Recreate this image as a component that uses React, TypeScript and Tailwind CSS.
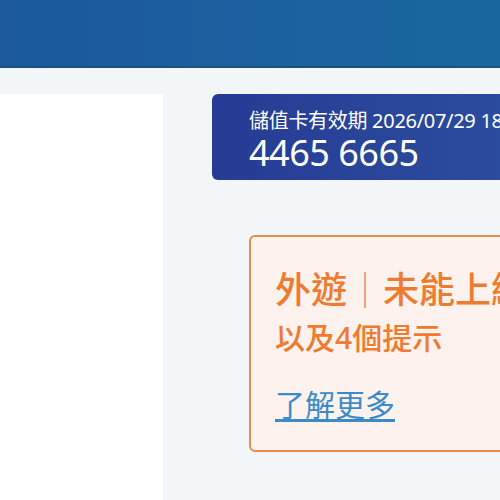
import React from 'react'

const cjk = { fontFamily: '"Noto Sans", "Noto Sans CJK TC", sans-serif' }

function Header() {
  return (
    <div className="h-[68px] shrink-0 border-b-2 border-[#1d4f82] bg-gradient-to-r from-[#1b599b] to-[#1a679f]" />
  )
}

function CardBanner() {
  return (
    <div className="h-[86px] w-[400px] rounded-[6px] bg-gradient-to-r from-[#273b94] to-[#2c53a2] pl-[37px] pt-[14px] text-white">
      <div className="whitespace-nowrap text-[20px] leading-[26px] tracking-[-0.3px]">儲值卡有效期 2026/07/29 18:00</div>
      <div className="text-[36px] leading-[38px] tracking-[-0.5px]">4465 6665</div>
    </div>
  )
}

function NoticeCard() {
  return (
    <div className="ml-[37px] h-[217px] w-[360px] rounded-[6px] border-2 border-[#e98c4f] bg-[#fdf2ed] pl-[24px] pt-[28px]">
      <div className="flex items-center whitespace-nowrap text-[36px] leading-[50px] font-medium text-[#ee7b2f]">
        <span>外遊</span>
        <span className="mx-[17px] h-[36px] w-[2px] bg-[#f0a678]" />
        <span>未能上網</span>
      </div>
      <div className="mt-[3px] text-[30px] leading-[40px] font-medium text-[#ee7b2f]">以及4個提示</div>
      <a className="mt-[27px] inline-block text-[30px] leading-[40px] text-[#3b8bc9] underline underline-offset-[3px]">
        了解更多
      </a>
    </div>
  )
}

export default function App() {
  return (
    <div className="flex h-[500px] w-[500px] flex-col overflow-hidden bg-[#f3f6f9]" style={cjk}>
      <Header />
      <div className="flex flex-1 pt-[26px]">
        <div className="w-[163px] shrink-0 bg-white" />
        <div className="ml-[49px] flex w-[400px] shrink-0 flex-col gap-[55px]">
          <CardBanner />
          <NoticeCard />
        </div>
      </div>
    </div>
  )
}
